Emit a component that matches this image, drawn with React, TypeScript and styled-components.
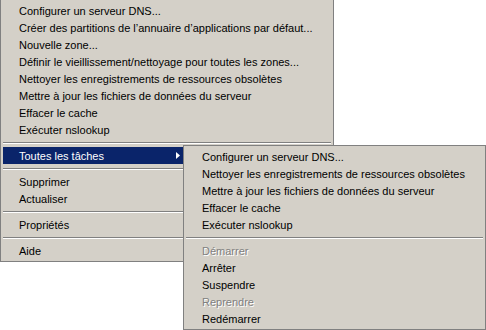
import styled, { createGlobalStyle } from 'styled-components';

let GlobalStyle = createGlobalStyle`
  html, body {
    margin: 0;
    background: #ffffff;
  }
  body {
    font-family: "Liberation Sans", Arial, sans-serif;
    font-size: 11px;
    color: #000000;
  }
`;

let Desktop = styled.div`
  position: relative;
  width: 486px;
  height: 330px;
  overflow: hidden;
`;

let Menu = styled.div<{ $width: number }>`
  box-sizing: border-box;
  width: ${p => p.$width}px;
  padding: 2px;
  border: 1px solid #808080;
  background: #d4d0c8;
  display: flex;
  flex-direction: column;
`;

let MainMenu = styled(Menu)`
  margin-top: -1px;
`;

// flyout opened from "Toutes les tâches", drawn over the main menu
let SubMenu = styled(Menu)`
  position: absolute;
  left: 183px;
  top: 145px;
`;

let Item = styled.div<{ $active?: boolean; $disabled?: boolean }>`
  display: flex;
  align-items: flex-start;
  height: 17px;
  box-sizing: border-box;
  padding: 1px 0 0 16px;
  line-height: 16px;
  white-space: nowrap;
  background: ${p => (p.$active ? '#0a246a' : 'transparent')};
  color: ${p => (p.$active ? '#ffffff' : p.$disabled ? '#808080' : '#000000')};
  text-shadow: ${p => (p.$disabled ? '1px 1px 0 #ffffff' : 'none')};
`;

let ItemLabel = styled.span<{ $width?: number }>`
  display: inline-block;
  width: ${p => (p.$width ? `${p.$width}px` : 'auto')};
`;

let Arrow = styled.svg`
  display: block;
  margin-top: 4px;
`;

let Separator = styled.div`
  margin: 4px 0 3px;
  border-top: 1px solid #808080;
  border-bottom: 1px solid #ffffff;
`;

let mainTop = [
  'Configurer un serveur DNS...',
  'Créer des partitions de l’annuaire d’applications par défaut...',
  'Nouvelle zone...',
  'Définir le vieillissement/nettoyage pour toutes les zones...',
  'Nettoyer les enregistrements de ressources obsolètes',
  'Mettre à jour les fichiers de données du serveur',
  'Effacer le cache',
  'Exécuter nslookup'
];

let taskItems = [
  'Configurer un serveur DNS...',
  'Nettoyer les enregistrements de ressources obsolètes',
  'Mettre à jour les fichiers de données du serveur',
  'Effacer le cache',
  'Exécuter nslookup'
];

let serviceItems = [
  { label: 'Démarrer', disabled: true },
  { label: 'Arrêter', disabled: false },
  { label: 'Suspendre', disabled: false },
  { label: 'Reprendre', disabled: true },
  { label: 'Redémarrer', disabled: false }
];

export default function App() {
  return (
    <>
      <GlobalStyle />
      <Desktop>
        <MainMenu $width={334}>
          {mainTop.map(label => (
            <Item key={label}>{label}</Item>
          ))}
          <Separator />
          <Item $active>
            <ItemLabel $width={157}>Toutes les tâches</ItemLabel>
            <Arrow width="4" height="7" viewBox="0 0 4 7">
              <polygon points="0,0 4,3.5 0,7" fill="#ffffff" />
            </Arrow>
          </Item>
          <Separator />
          <Item>Supprimer</Item>
          <Item>Actualiser</Item>
          <Separator />
          <Item>Propriétés</Item>
          <Separator />
          <Item>Aide</Item>
        </MainMenu>

        <SubMenu $width={303}>
          {taskItems.map(label => (
            <Item key={label}>{label}</Item>
          ))}
          <Separator />
          {serviceItems.map(s => (
            <Item key={s.label} $disabled={s.disabled}>
              {s.label}
            </Item>
          ))}
        </SubMenu>
      </Desktop>
    </>
  );
}
